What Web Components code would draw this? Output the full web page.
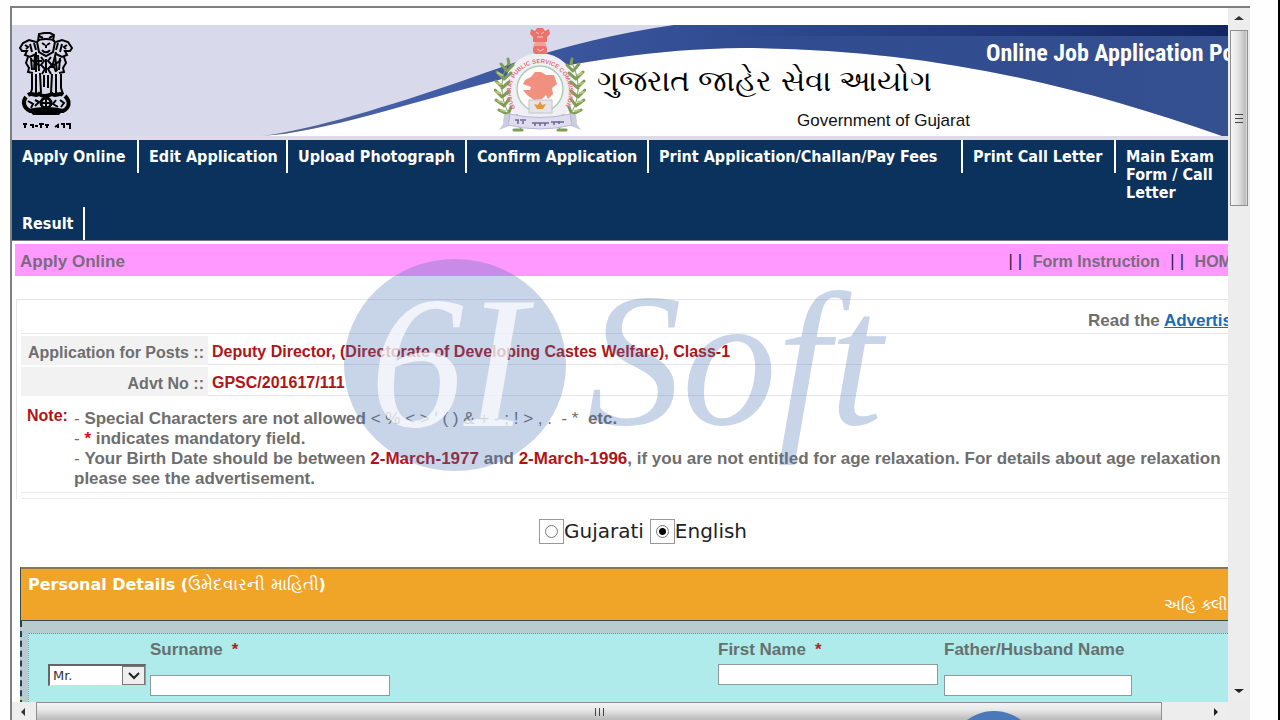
<!DOCTYPE html>
<html lang="en">
<head>
<meta charset="utf-8">
<title>Online Job Application Portal</title>
<style>
  body {
    margin: 0;
    background: #fefefe;
    font-family: "Liberation Sans", Arial, sans-serif;
    font-size: 16px;
    overflow: hidden;
  }
</style>
</head>
<body>
<app-window>
  <portal-banner></portal-banner>
  <portal-nav>
    <nav-item>Apply Online</nav-item>
    <nav-item>Edit Application</nav-item>
    <nav-item>Upload Photograph</nav-item>
    <nav-item>Confirm Application</nav-item>
    <nav-item>Print Application/Challan/Pay Fees</nav-item>
    <nav-item>Print Call Letter</nav-item>
    <nav-item last>Main Exam Form / Call Letter</nav-item>
    <nav-item>Result</nav-item>
  </portal-nav>
  <title-bar>Apply Online</title-bar>
  <post-info></post-info>
  <language-choice></language-choice>
  <form-section>
    <span slot="title">Personal Details (</span>
    <span slot="title-gu" lang="gu">ઉમેદવારની માહિતી</span>
    <span slot="hint" lang="gu">અહિ ક્લીક કરો</span>
    <title-select></title-select>
    <form-field label="Surname" required low style="--field-width: 240px"></form-field>
    <form-field label="First Name" required style="--field-width: 220px"></form-field>
    <form-field label="Father/Husband Name" low style="--field-width: 188px"></form-field>
  </form-section>
</app-window>
<water-mark></water-mark>

<script>
class AppWindow extends HTMLElement {
  constructor() {
    super();
    this.attachShadow({ mode: 'open' });
    this.shadowRoot.innerHTML = `
      <style>
        :host {
          display: block;
          height: 100vh;
          box-sizing: border-box;
          padding: 6px 28px 0 10px;
          border-right: 2px solid #000;
          overflow: hidden;
        }
        .frame {
          display: grid;
          grid-template-columns: minmax(0, 1fr) 22px;
          grid-template-rows: minmax(0, 1fr) 18px;
          height: 100%;
          box-sizing: border-box;
          border-top: 2px solid #7f7f7f;
          border-left: 2px solid #7f7f7f;
          background: #ececec;
        }
        .page { background: #fff; overflow: hidden; padding-top: 17px; }
      </style>
      <div class="frame">
        <div class="page"><slot></slot></div>
        <scroll-bar direction="vertical"></scroll-bar>
        <scroll-bar direction="horizontal"></scroll-bar>
      </div>
    `;
  }
}

class ScrollBar extends HTMLElement {
  constructor() {
    super();
    this.attachShadow({ mode: 'open' });
  }

  connectedCallback() {
    const vertical = this.getAttribute('direction') === 'vertical';
    const arrows = vertical
      ? ['M1 7 L6 3 L11 7Z', 'M1 4 L6 8 L11 4Z']
      : ['M7 2 L3 6 L7 10Z', 'M4 2 L8 6 L4 10Z'];
    this.shadowRoot.innerHTML = `
      <style>
        :host { display: flex; background: #ededed; min-width: 0; min-height: 0; }
        :host([direction="vertical"]) { flex-direction: column; align-items: center; }
        button {
          display: flex;
          align-items: center;
          justify-content: center;
          flex: none;
          width: 24px;
          height: 22px;
          padding: 0;
          border: 0;
          background: none;
        }
        :host([direction="horizontal"]) button { height: 20px; }
        .track { display: flex; flex: 1; min-width: 0; min-height: 0; }
        :host([direction="horizontal"]) .track { margin-right: 42px; }
        .thumb {
          display: flex;
          align-items: center;
          justify-content: center;
          box-sizing: border-box;
          border: 1px solid #8f8f8f;
        }
        :host([direction="vertical"]) .thumb {
          width: 18px;
          height: 27%;
          background: linear-gradient(90deg, #f6f6f6, #e4e4e4 45%, #bdbdbd 90%, #e8e8e8);
        }
        :host([direction="horizontal"]) .thumb {
          height: 20px;
          width: 100%;
          background: linear-gradient(#f3f3f3, #e6e6e6 40%, #bcbcbc 90%);
        }
      </style>
      <button aria-label="Back"><svg width="12" height="12"><path d="${arrows[0]}" fill="#333"/></svg></button>
      <div class="track"><div class="thumb">
        <svg width="10" height="10" stroke="#444">${vertical
          ? '<path d="M1 1.500h8M1 5.500h8M1 9.500h8"/>'
          : '<path d="M1.500 1v8M5.500 1v8M9.500 1v8"/>'}</svg>
      </div></div>
      <button aria-label="Forward"><svg width="12" height="12"><path d="${arrows[1]}" fill="#222"/></svg></button>
    `;
  }
}

class PortalBanner extends HTMLElement {
  constructor() {
    super();
    this.attachShadow({ mode: 'open' });
    this.shadowRoot.innerHTML = `
      <style>
        :host { display: grid; height: 115px; overflow: hidden; background: #d8daec; }
        .art, .content { grid-area: 1 / 1; min-width: 0; }
        .art { width: 100%; height: 115px; }
        .content {
          display: grid;
          grid-template-columns: 482px 103px 389px minmax(0, 1fr);
        }
        .lions { padding: 7px 0 0 7px; }
        .seal { padding-top: 2px; }
        .names { display: flex; flex-direction: column; padding-top: 34px; white-space: nowrap; }
        h1 { margin: 0; font-size: 30px; line-height: 44px; font-weight: 400; }
        .gov { font-size: 17px; line-height: 36px; padding-left: 200px; color: #111; }
        .portal {
          padding-top: 11px;
          font-family: "Liberation Sans Narrow", "Roboto Condensed", "DejaVu Sans Condensed", sans-serif;
          font-weight: 700;
          font-size: 24px;
          line-height: 34px;
          color: #fff;
          white-space: nowrap;
        }
      </style>
      <svg class="art" viewBox="0 0 1216 115" preserveAspectRatio="none" aria-hidden="true">
        <defs>
          <linearGradient id="sweep">
            <stop offset="0" stop-color="#5a6180"/><stop offset=".12" stop-color="#4460a8"/>
            <stop offset=".5" stop-color="#304b90"/><stop offset="1" stop-color="#35508f"/>
          </linearGradient>
          <linearGradient id="shade">
            <stop offset="0" stop-color="#16296a" stop-opacity="0"/><stop offset="1" stop-color="#122762"/>
          </linearGradient>
        </defs>
        <path d="M249 111 C310 108 400 77 490 54 C560 38 640 24 730 23 C900 23 1050 55 1210 111Z" fill="#fff"/>
        <path d="M249 111 C300 105 380 80 450 56 C520 30 590 10 662 0 H1216 V111 H1210 C1050 55 900 23 730 23 C640 24 560 38 490 54 C400 77 310 108 249 111Z" fill="url(#sweep)"/>
        <rect x="720" width="496" height="11" fill="url(#shade)"/>
        <rect y="111" width="1216" height="4" fill="#dddbea"/>
      </svg>
      <div class="content">
        <svg class="lions" width="54" height="98" viewBox="0 0 54 98" role="img" aria-label="State emblem">
          <g fill="none" stroke="#000" stroke-width="2">
            <path d="M19 9 L20 2 L25 1 H31 L35 3 L34 9 M18 10 C20 6 34 6 36 10 L34 20 L27 24 L20 20Z"/>
            <path d="M20 4 L24 6 M34 4 L30 6 M23 11 l3 2 m5 -2 l-3 2 M27 13 v3 M23 18 c2 3 6 3 8 0"/>
            <path d="M17 10 L10 8 L4 11 L1 16 L3 19 L8 19 L6 23 L11 25 L17 22 M6 13 L9 15 L7 17 M11 12 L13 20 M15 11 L17 18"/>
            <path d="M37 10 L43 8 L49 10 L53 16 L51 19 L46 19 L48 23 L43 25 L37 22 M48 13 L45 15 L47 17 M43 12 L41 20 M39 11 L37 18"/>
            <path d="M9 25 L7 31 L10 36 L9 40 L14 41 M45 25 L47 31 L44 36 L45 40 L40 41 M12 26 l1 12 M16 24 l-1 14 M19 23 l1 16 M36 24 l2 15 M41 26 l-1 12"/>
            <path d="M22 25 l3 4 l-3 4 l4 4 l-3 5 M32 25 l-3 4 l4 4 l-4 4 l3 5 M27 27 v14 M17 20v20M37 20l-3 12l3 8M13 28l8 6M42 28l-8 6M18 29h5M30 35h5"/>
            <path d="M13 42 v15 l-2 6 M17 42 v20 M21 41 l1 20 M25 43 v12 M29 43 v13 M33 42 l-1 19 M37 42 v19 M42 42 v14 l2 6"/>
            <path d="M9 63 c5 -3 7 2 11 -1 c4 3 9 2 13 0 c4 3 7 -2 11 1 M7 65 C3 70 5 76 11 79 H44 C50 76 52 70 46 64" stroke-width="4"/>
            <circle cx="27" cy="71" r="5" stroke-width="3"/>
            <path d="M27 66v10M22 71h10M9 69l5 3l-2 4m4 -8l4 2l-4 4m21 -6l-3 4l5 3m2 -7l4 3l-3 4"/>
          </g>
          <path d="M9 77 Q27 73 45 77 L40 83 H14Z"/>
          <path d="M4 92h4M6 92v4M11 93h3v3M16 94h3M20 92h5M22 92v4M26 93h4M28 92v4M36 95l3-2v3M42 92h3v4M47 92h5M51 91v6" fill="none" stroke="#000" stroke-width="2"/>
        </svg>
        <svg class="seal" width="92" height="112" viewBox="0 0 92 112" role="img" aria-label="Gujarat Public Service Commission">
          <circle cx="46" cy="62" r="36" fill="#f1eff6"/>
          <g stroke-linecap="round" fill="none" stroke="#7f9d58" stroke-width="3">
            <g>
              <path d="M14 36 C2 60 8 85 29 104" stroke-width="1"/>
              <path d="M15 37l-1 -5M12 43l-5 -6M13 44l6 -6M9 51l-6 -6M10 52l7 -6M8 60l-6 -6M8 61l7 -6M7 69l-6 -6M8 70l7 -6M9 78l-7 -5M10 79l5 -7M13 87l-8 -4M14 88l3 -8M19 95l-8 -2M21 97l2 -8M28 103l-8 0"/>
              <path d="M8 48l-4 -2M7 57l-4 -1M6 66l-4 -1M8 75l-4 -1M11 84l-4 -1" stroke="#b9c878" stroke-width="2"/>
            </g>
            <g transform="translate(92 0) scale(-1 1)">
              <path d="M14 36 C2 60 8 85 29 104" stroke-width="1"/>
              <path d="M15 37l-1 -5M12 43l-5 -6M13 44l6 -6M9 51l-6 -6M10 52l7 -6M8 60l-6 -6M8 61l7 -6M7 69l-6 -6M8 70l7 -6M9 78l-7 -5M10 79l5 -7M13 87l-8 -4M14 88l3 -8M19 95l-8 -2M21 97l2 -8M28 103l-8 0"/>
              <path d="M8 48l-4 -2M7 57l-4 -1M6 66l-4 -1M8 75l-4 -1M11 84l-4 -1" stroke="#b9c878" stroke-width="2"/>
            </g>
          </g>
          <circle cx="46" cy="62" r="23" fill="#fffafa" stroke="#a9cfb4" stroke-width="1.500"/>
          <path id="ring" d="M24 84 A29 29 0 1 1 68 84" fill="none"/>
          <text font-family="Liberation Sans, sans-serif" font-size="6" font-weight="700" fill="#dd7078"><textPath href="#ring" startOffset="4">GUJARAT PUBLIC SERVICE COMMISSION</textPath></text>
          <path d="M31 53 l6 -3 l4 -5 h6 l5 3 l8 0 l3 9 l-5 4 l1 6 l-5 5 l-2 -4 l-4 4 l-8 1 l-7 -5 l-4 -5 l7 0 l1 -3 l-8 -3Z" fill="#f0907e"/>
          <rect x="35" y="73" width="23" height="13" fill="#e6e3ec" stroke="#c0c8c4"/>
          <path d="M46 74l2 4l4 -1l-3 5h-6l-3 -5l4 1Z" fill="#e99a2d"/>
          <path d="M10 88 L17 86 L15 99 L5 103 L9 97Z M82 88 L75 86 L77 99 L87 103 L83 97Z" fill="#cccbe0"/>
          <path d="M16 87 Q46 94 76 87 L78 98 Q46 106 14 98Z" fill="#dedced" stroke="#b9b6d3"/>
          <path d="M21 93h4m1 0h6M38 96h17m2 -1h13M24 93v4M29 94v3M41 96v3M46 96v3M51 96v3M60 95v3M65 94v3" stroke="#6d6796" fill="none" stroke-width="1.500"/>
          <g fill="#ec736c">
            <path d="M37 2l4 2l2 -3h6l2 3l4 -2l1 5l-3 3v5h-14v-5l-3 -3Z"/>
            <path d="M41 15h10l2 5h-14Z" fill="#f0a199"/>
            <rect x="39" y="19" width="14" height="8" rx="3"/>
          </g>
          <path d="M42 5l3 2m5 -2l-3 2M43 10h6M43 22l3 2l4 -2" stroke="#fbd0cb" fill="none"/>
        </svg>
        <div class="names">
          <h1 lang="gu">ગુજરાત જાહેર સેવા આયોગ</h1>
          <div class="gov">Government of Gujarat</div>
        </div>
        <div class="portal">Online Job Application Portal</div>
      </div>
    `;
  }
}

class PortalNav extends HTMLElement {
  constructor() {
    super();
    this.attachShadow({ mode: 'open' });
    this.shadowRoot.innerHTML = `
      <style>
        :host { display: block; background: #0a325d; border-bottom: 1px solid #6f7684; }
        nav {
          display: grid;
          grid-template-columns: 127px 149px 179px 182px 314px 153px minmax(0, 1fr);
          grid-template-rows: 67px 33px;
          align-items: start;
        }
      </style>
      <nav><slot></slot></nav>
    `;
  }
}

class NavItem extends HTMLElement {
  constructor() {
    super();
    this.attachShadow({ mode: 'open' });
    this.shadowRoot.innerHTML = `
      <style>
        :host {
          display: block;
          box-sizing: border-box;
          height: 33px;
          border-right: 2px solid #fff;
          padding: 8px 0 0 10px;
          white-space: nowrap;
          justify-self: stretch;
        }
        :host([last]) { border: 0; white-space: normal; height: auto; }
        :host(:last-of-type) { margin-right: 54px; }
        a {
          font-family: "DejaVu Sans Condensed", Tahoma, sans-serif;
          font-weight: 700;
          font-size: 16px;
          line-height: 18px;
          display: block;
          color: #fff;
          text-decoration: none;
        }
      </style>
      <a href="#"><slot></slot></a>
    `;
  }
}

class TitleBar extends HTMLElement {
  constructor() {
    super();
    this.attachShadow({ mode: 'open' });
    this.shadowRoot.innerHTML = `
      <style>
        :host {
          display: flex;
          align-items: center;
          height: 32px;
          margin: 3px 0 0 3px;
          padding-left: 5px;
          box-sizing: border-box;
          background: #ff99ff;
          color: #7a6a80;
          font-weight: 700;
          line-height: 18px;
        }
        .title { flex: 1; font-size: 17px; padding-top: 3px; }
        .links {
          display: flex;
          align-items: center;
          gap: 8px;
          flex: 0 0 222px;
          min-width: 0;
          white-space: nowrap;
        }
        .links a { padding-top: 3px; }
        a { color: inherit; text-decoration: none; }
        i { font: 17px/20px "Noto Sans", sans-serif; color: #201030; }
      </style>
      <span class="title"><slot></slot></span>
      <span class="links"><i>||</i><a href="#">Form Instruction</a><i>||</i><a href="#">HOME</a></span>
    `;
  }
}

class PostInfo extends HTMLElement {
  constructor() {
    super();
    this.attachShadow({ mode: 'open' });
    this.shadowRoot.innerHTML = `
      <style>
        :host {
          display: block;
          margin: 23px 0 0 4px;
          border-top: 1px solid #e2e4e8;
          border-left: 1px solid #e8e8e8;
          padding-left: 4px;
          color: #6e6e6e;
          font-weight: 700;
        }
        .read {
          display: flex;
          justify-content: flex-end;
          height: 34px;
          box-sizing: border-box;
          padding-top: 12px;
          font-size: 17px;
          line-height: 18px;
          border-bottom: 1px solid #e8e8e8;
        }
        .read span { flex: 0 0 140px; min-width: 0; white-space: nowrap; }
        .read a { color: #1a6bb5; }
        table { width: 100%; border-collapse: separate; border-spacing: 0 2px; }
        th, td { height: 29px; box-sizing: border-box; padding: 4px 0 0 4px; line-height: 18px; }
        th { width: 187px; padding: 4px 4px 0 0; text-align: right; background: #f2f2f2; }
        td { color: #b01418; border-bottom: 1px solid #e4e6ea; }
        .note {
          display: grid;
          grid-template-columns: 47px minmax(0, 1fr);
          padding: 10px 3px 3px 6px;
          line-height: 20px;
          border-bottom: 1px solid #ececec;
        }
        .note p { margin: 0; font-size: 17px; }
        .lines { padding-top: 1px; }
        .note > b { line-height: 16px; }
        b { color: #b01418; }
        .star { color: #e01010; }
        .plain { font-weight: 400; }
        .end { height: 5px; border-bottom: 1px solid #ececec; }
      </style>
      <div class="read"><span>Read the <a href="#">Advertisement</a></span></div>
      <table>
        <tr><th scope="row">Application for Posts ::</th><td>Deputy Director, (Directorate of Developing Castes Welfare), Class-1</td></tr>
        <tr><th scope="row">Advt No ::</th><td>GPSC/201617/111</td></tr>
      </table>
      <div class="note">
        <b>Note:</b>
        <div class="lines">
          <p><span class="plain">- </span> Special Characters are not allowed <span class="plain">&lt; % &lt; &gt; ' ( ) &amp; + - ; ! &gt; , . &nbsp;- * &nbsp;</span>etc.</p>
          <p><span class="plain">- </span><b class="star">*</b> indicates mandatory field.</p>
          <p><span class="plain">- </span>Your Birth Date should be between <b>2-March-1977</b> and <b>2-March-1996</b>, if you are not entitled for age relaxation. For details about age relaxation please see the advertisement.</p>
        </div>
      </div>
      <div class="end"></div>
    `;
  }
}

class LanguageChoice extends HTMLElement {
  constructor() {
    super();
    this.attachShadow({ mode: 'open' });
    this.shadowRoot.innerHTML = `
      <style>
        :host {
          display: flex;
          justify-content: center;
          gap: 6px;
          padding: 20px 0 23px 46px;
          font: 20px/25px "DejaVu Sans", Verdana, sans-serif;
          color: #222;
        }
        label { display: flex; align-items: center; }
        .box {
          display: flex;
          align-items: center;
          justify-content: center;
          width: 23px;
          height: 23px;
          border: 1px solid #999;
        }
        input {
          appearance: none;
          width: 13px;
          height: 13px;
          margin: 0;
          border: 1px solid #777;
          border-radius: 50%;
        }
        input:checked { background: radial-gradient(circle, #000 3px, #fff 4px); }
      </style>
      <label><span class="box"><input type="radio" name="lang"></span>Gujarati</label>
      <label><span class="box"><input type="radio" name="lang" checked></span>English</label>
    `;
  }
}

class FormSection extends HTMLElement {
  constructor() {
    super();
    this.attachShadow({ mode: 'open' });
    this.shadowRoot.innerHTML = `
      <style>
        :host { display: block; margin-left: 8px; }
        header {
          display: flex;
          justify-content: space-between;
          height: 51px;
          border-top: 2px solid #8a7650;
          border-bottom: 1px solid #3b4a4a;
          border-left: 1px solid #3b4a4a;
          background: #f0a428;
          color: #fff;
          font: 700 16px/20px "DejaVu Sans", Verdana, sans-serif;
        }
        .title { padding: 5px 0 0 7px; white-space: nowrap; }
        .gu { font-weight: 400; font-size: 17px; }
        .hint {
          flex: 0 0 64px;
          min-width: 0;
          padding-top: 26px;
          white-space: nowrap;
          font-weight: 400;
        }
        .body {
          padding: 12px 0 0 6px;
          border-left: 2px dashed #20404a;
          background: #b8cbcf;
        }
        .fields {
          display: grid;
          grid-template-columns: 102px 568px 226px minmax(0, 1fr);
          padding: 7px 0 20px 19px;
          border-top: 1px dotted #a07850;
          border-left: 1px dotted #e09060;
          background: #aeebea;
        }
      </style>
      <header>
        <span class="title"><slot name="title"></slot><span class="gu"><slot name="title-gu"></slot></span>)</span>
        <span class="hint"><slot name="hint"></slot></span>
      </header>
      <div class="body"><div class="fields"><slot></slot></div></div>
    `;
  }
}

class TitleSelect extends HTMLElement {
  constructor() {
    super();
    this.attachShadow({ mode: 'open' });
    this.shadowRoot.innerHTML = `
      <style>
        :host { display: block; padding-top: 23px; }
        .wrap {
          display: grid;
          width: 98px;
          height: 22px;
          box-sizing: border-box;
          border: 2px solid #666;
          border-right: 1px solid #999;
          border-bottom: 1px solid #ddd;
          background: #fff;
        }
        select {
          grid-area: 1 / 1;
          appearance: none;
          border: 0;
          padding: 0 3px;
          background: #fff;
          color: #333;
          font: 13px "DejaVu Sans", Verdana, sans-serif;
        }
        svg { grid-area: 1 / 1; justify-self: end; pointer-events: none; }
      </style>
      <div class="wrap">
        <select aria-label="Title"><option>Mr.</option></select>
        <svg width="23" height="19"><rect x=".500" y=".500" width="22" height="18" fill="#eee" stroke="#777"/><path d="M7 7l5 5l5 -5" fill="none" stroke="#222" stroke-width="2"/></svg>
      </div>
    `;
  }
}

class FormField extends HTMLElement {
  constructor() {
    super();
    this.attachShadow({ mode: 'open' });
  }

  connectedCallback() {
    const star = this.hasAttribute('required') ? '<em>*</em>' : '';
    this.shadowRoot.innerHTML = `
      <style>
        :host { display: flex; flex-direction: column; align-items: flex-start; gap: 5px; }
        :host([low]) { gap: 16px; }
        label {
          display: flex;
          gap: 9px;
          color: #66706f;
          font-size: 17px;
          font-weight: 700;
          line-height: 18px;
        }
        em { color: #c01818; font-style: normal; }
        input {
          box-sizing: border-box;
          width: var(--field-width);
          height: 21px;
          border: 1px solid #8d9a9e;
          background: #fff;
        }
      </style>
      <label for="field">${this.getAttribute('label')}${star}</label>
      <input id="field" type="text">
    `;
  }
}

class WaterMark extends HTMLElement {
  constructor() {
    super();
    this.attachShadow({ mode: 'open' });
    // Translucent logo that floats over the whole page
    this.shadowRoot.innerHTML = `
      <style>
        :host { position: absolute; inset: 0; overflow: hidden; pointer-events: none; }
        svg { display: block; width: 100%; height: 100%; }
        text { font-family: "Liberation Serif", serif; font-style: italic; }
      </style>
      <svg viewBox="0 0 1280 720" aria-hidden="true">
        <ellipse cx="455" cy="365" rx="111" ry="106" fill="#4870b2" fill-opacity=".300"/>
        <text x="370" y="426" font-size="188" fill="#fff" fill-opacity=".720">6I</text>
        <text x="587" y="424" font-size="190" fill="#4870b2" fill-opacity=".300">Soft</text>
        <circle cx="994" cy="756" r="45" fill="#4a78b8"/>
      </svg>
    `;
  }
}

customElements.define('scroll-bar', ScrollBar);
customElements.define('app-window', AppWindow);
customElements.define('portal-banner', PortalBanner);
customElements.define('portal-nav', PortalNav);
customElements.define('nav-item', NavItem);
customElements.define('title-bar', TitleBar);
customElements.define('post-info', PostInfo);
customElements.define('language-choice', LanguageChoice);
customElements.define('form-section', FormSection);
customElements.define('title-select', TitleSelect);
customElements.define('form-field', FormField);
customElements.define('water-mark', WaterMark);
</script>
</body>
</html>
